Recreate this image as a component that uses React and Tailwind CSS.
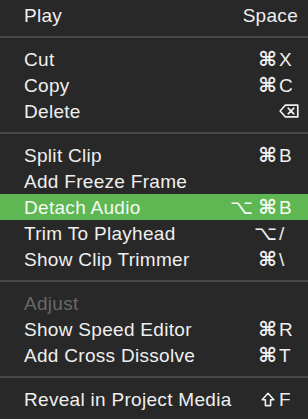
import React from 'react';

const DeleteKey = () => (
  <svg width="20" height="14" viewBox="0 0 20 14" fill="none" stroke="currentColor" strokeWidth="1.7">
    <path d="M6.2 1.2h12.6v11.6H6.2L1.2 7z" strokeLinejoin="round" />
    <path d="M9.2 4.2l5.6 5.6M14.8 4.2l-5.6 5.6" strokeLinecap="round" />
  </svg>
);

const ShiftKey = () => (
  <svg width="14" height="15" viewBox="0 0 14 15" fill="none" stroke="currentColor" strokeWidth="1.6">
    <path d="M7 1.3l5.8 6.4H9.6v5.9H4.4V7.7H1.2z" strokeLinejoin="round" />
  </svg>
);

const groups = [
  [{ label: 'Play', key: 'Space', wide: true }],
  [
    { label: 'Cut', mods: ['⌘'], key: 'X' },
    { label: 'Copy', mods: ['⌘'], key: 'C' },
    { label: 'Delete', key: 'del' },
  ],
  [
    { label: 'Split Clip', mods: ['⌘'], key: 'B' },
    { label: 'Add Freeze Frame' },
    { label: 'Detach Audio', mods: ['⌥', '⌘'], key: 'B', active: true },
    { label: 'Trim To Playhead', mods: ['⌥'], key: '/' },
    { label: 'Show Clip Trimmer', mods: ['⌘'], key: '\\' },
  ],
  [
    { label: 'Adjust', disabled: true },
    { label: 'Show Speed Editor', mods: ['⌘'], key: 'R' },
    { label: 'Add Cross Dissolve', mods: ['⌘'], key: 'T' },
  ],
  [{ label: 'Reveal in Project Media', mods: ['⇧'], key: 'F' }],
];

const MenuItem = ({ item }) => {
  const rowColor = item.active
    ? 'bg-[#5fb753] text-[#f4fbf2]'
    : item.disabled
    ? 'text-[#686868]'
    : 'text-[#efefef]';

  return (
    <div className={`flex h-[26px] items-center justify-between pl-[24px] pr-[9px] ${rowColor}`}>
      <span>{item.label}</span>
      {item.key && (
        <span className="flex items-center">
          {item.mods && (
            <span className="mr-[2px] flex items-center gap-[5px] font-['DejaVu_Sans',sans-serif] text-[20px]">
              {item.mods.map((m) =>
                m === '⇧' ? (
                  <span key={m} className="mr-[2px] flex">
                    <ShiftKey />
                  </span>
                ) : (
                  <span key={m} className={m === '⌘' ? 'font-bold' : 'font-normal'}>
                    {m}
                  </span>
                )
              )}
            </span>
          )}
          {item.wide ? (
            <span className="mr-[1px]">{item.key}</span>
          ) : item.key === 'del' ? (
            <span className="flex w-[20px] justify-end">
              <DeleteKey />
            </span>
          ) : (
            <span className="w-[20px] text-left">{item.key}</span>
          )}
        </span>
      )}
    </div>
  );
};

const App = () => {
  return (
    <div className="h-[419px] w-[308px] overflow-hidden bg-[#282828] pt-[2px] font-['Liberation_Sans',Arial,sans-serif] text-[19px] leading-none tracking-[0.3px]">
      {groups.map((group, i) => (
        <div key={i}>
          {i > 0 && <div className="my-[8px] h-[2px] bg-[#474747]" />}
          {group.map((item) => (
            <MenuItem key={item.label} item={item} />
          ))}
        </div>
      ))}
    </div>
  );
};

export default App;
